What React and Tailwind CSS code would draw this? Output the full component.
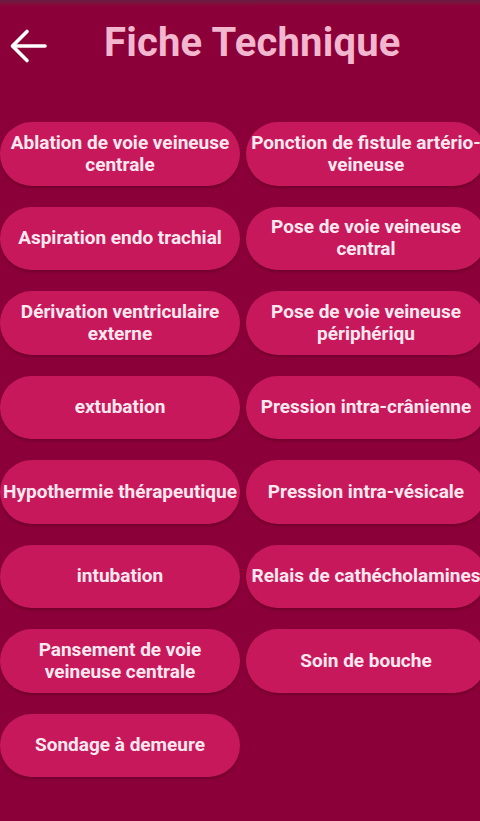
import React from "react";

const items = [
  "Ablation de voie veineuse centrale",
  "Ponction de fistule artério-veineuse",
  "Aspiration endo trachial",
  "Pose de voie veineuse central",
  "Dérivation ventriculaire externe",
  "Pose de voie veineuse périphériqu",
  "extubation",
  "Pression intra-crânienne",
  "Hypothermie thérapeutique",
  "Pression intra-vésicale",
  "intubation",
  "Relais de cathécholamines",
  "Pansement de voie veineuse centrale",
  "Soin de bouche",
  "Sondage à demeure",
];

export default function App() {
  return (
    <div
      className="w-[480px] h-[821px] overflow-hidden bg-[#8c0039] relative"
      style={{ fontFamily: "Roboto, 'Noto Sans', sans-serif" }}
    >
      <div className="h-[6px] bg-gradient-to-b from-[#6a1a42] to-[#8c0039]" />
      <div className="h-[94px] flex items-start pt-[13px]">
        <div className="w-[56px] pl-[9px] pt-[9px]">
          <svg width="38" height="36" viewBox="0 0 38 36" fill="none" stroke="#ffffff" strokeWidth="3.6" strokeLinecap="round" strokeLinejoin="round">
            <path d="M36 18H4" />
            <path d="M18 3.5L3.5 18L18 32.5" />
          </svg>
        </div>
        <div className="pl-[48px] text-[40px] font-bold text-[#f3b6cf] leading-[48px] tracking-[0.2px]">
          Fiche Technique
        </div>
      </div>
      <div className="pt-[22px] grid grid-cols-[240px_240px] gap-x-[6px] gap-y-[21px] w-[486px]">
        {items.map((t) => (
          <div
            key={t}
            className="h-[63.5px] rounded-full bg-[#c8185c] shadow-[0_2px_3px_rgba(60,0,20,0.35)] flex items-center justify-center text-center text-[19px] font-bold leading-[22px] text-[#fde8f0] px-[2px]"
          >
            <span>{t}</span>
          </div>
        ))}
      </div>
    </div>
  );
}
